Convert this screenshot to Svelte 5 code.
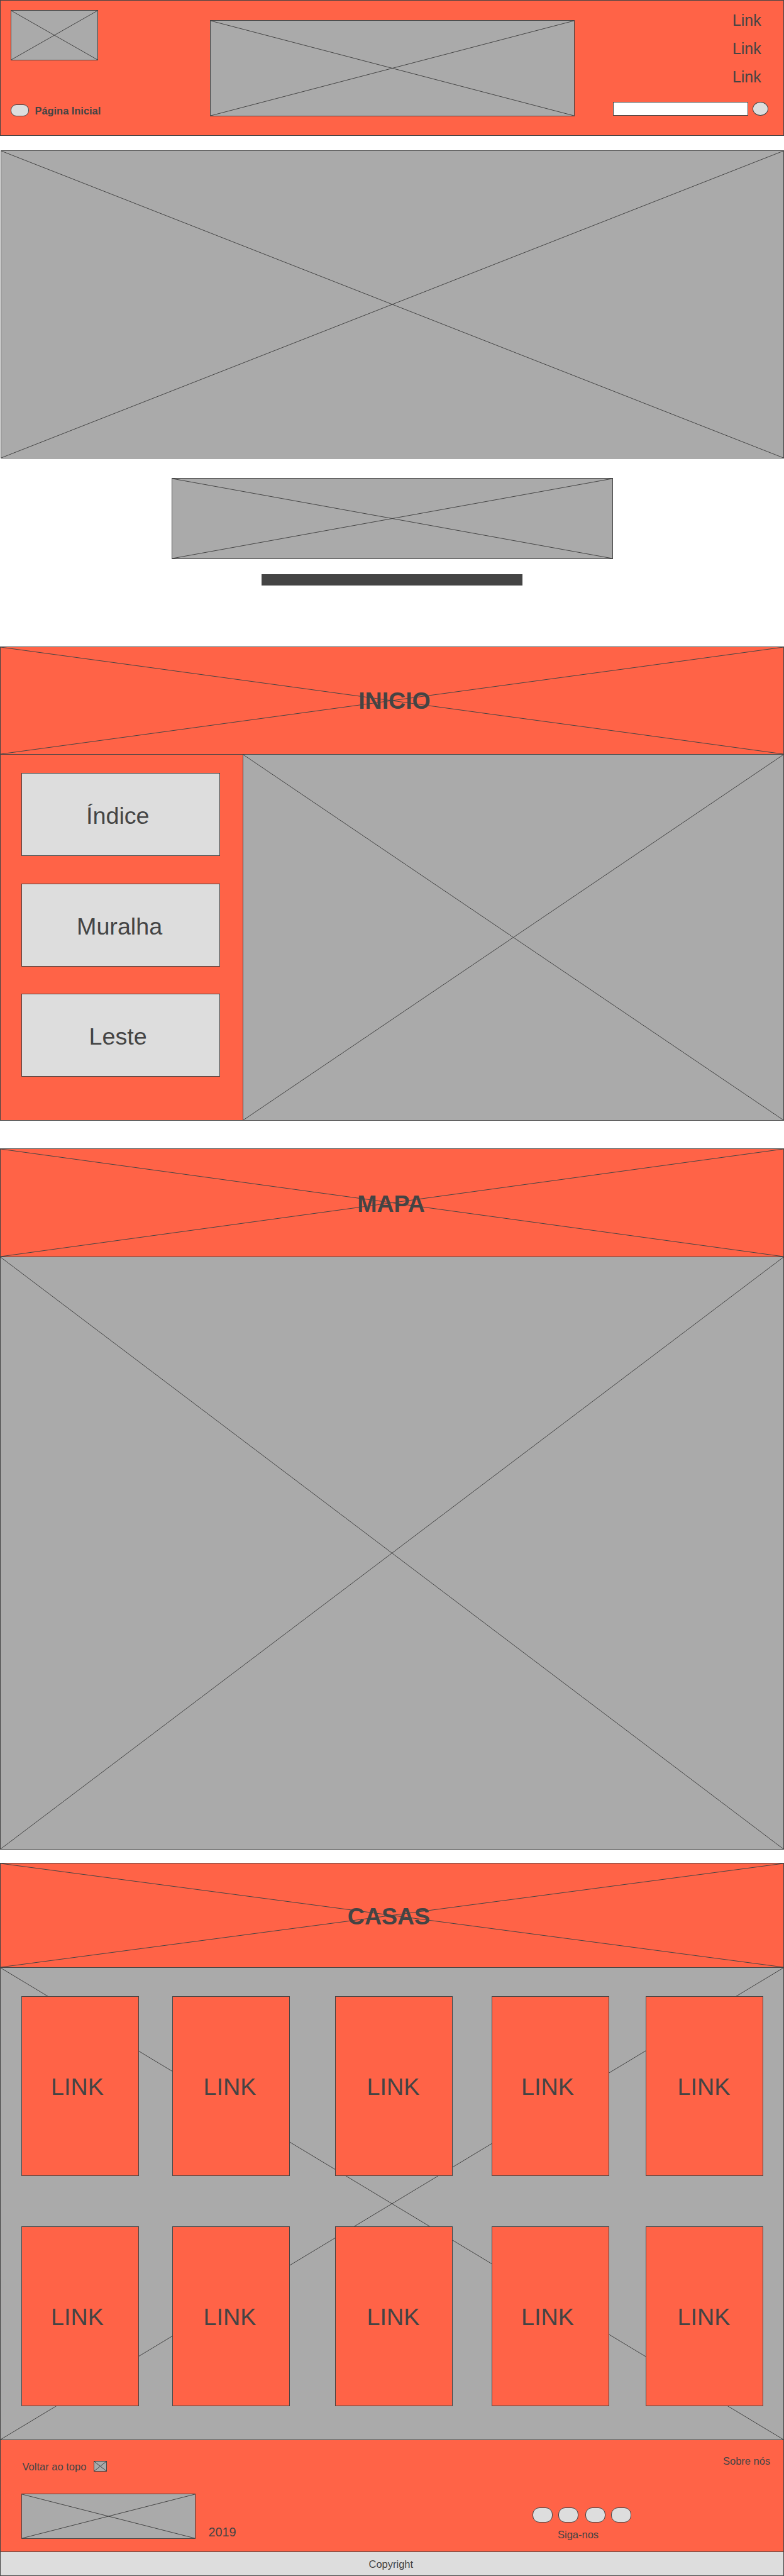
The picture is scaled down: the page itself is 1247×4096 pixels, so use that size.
<script>
  const menu = ['Índice', 'Muralha', 'Leste'];
  const houses = Array.from({ length: 10 }, () => 'LINK');
</script>

{#snippet cross()}
  <svg class="cross" viewBox="0 0 100 100" preserveAspectRatio="none" aria-hidden="true">
    <line x1="0" y1="0" x2="100" y2="100" />
    <line x1="100" y1="0" x2="0" y2="100" />
  </svg>
{/snippet}

<div class="page">
  <header class="box">
    <div class="brand">
      <div class="image logo">{@render cross()}</div>
      <div class="home"><span class="pill"></span><b>Página Inicial</b></div>
    </div>
    <div class="image banner">{@render cross()}</div>
    <div class="tools">
      <nav>
        <a>Link</a>
        <a>Link</a>
        <a>Link</a>
      </nav>
      <div class="search"><span class="field"></span><span class="go"></span></div>
    </div>
  </header>

  <div class="image hero">{@render cross()}</div>
  <div class="image caption">{@render cross()}</div>
  <div class="bar"></div>

  <section class="inicio">
    <div class="box title">{@render cross()}<h2>INICIO</h2></div>
    <div class="columns">
      <div class="box menu">
        {#each menu as item}
          <div class="button"><span>{item}</span></div>
        {/each}
      </div>
      <div class="image view">{@render cross()}</div>
    </div>
  </section>

  <section class="mapa">
    <div class="box title">{@render cross()}<h2>MAPA</h2></div>
    <div class="image map">{@render cross()}</div>
  </section>

  <section class="casas">
    <div class="box title">{@render cross()}<h2>CASAS</h2></div>
    <div class="image houses">
      {@render cross()}
      {#each houses as label}
        <div class="box card"><span>{label}</span></div>
      {/each}
    </div>
  </section>

  <footer>
    <div class="box foot">
      <div class="left">
        <div class="top"><span>Voltar ao topo</span><div class="image mini">{@render cross()}</div></div>
        <div class="sign"><div class="image mark">{@render cross()}</div><span>2019</span></div>
      </div>
      <div class="social">
        <div class="pills">
          <span class="pill"></span><span class="pill"></span><span class="pill"></span><span class="pill"></span>
        </div>
        <span class="follow">Siga-nos</span>
      </div>
      <span class="about">Sobre nós</span>
    </div>
    <div class="copy">Copyright</div>
  </footer>
</div>

<style>
  :global(body) {
    background: #fff;
  }
  .page,
  .page * {
    box-sizing: border-box;
  }
  .page {
    width: 1247px;
    height: 4096px;
    overflow: hidden;
    display: flex;
    flex-direction: column;
    font-family: 'Liberation Sans', Arial, sans-serif;
    color: #444;
  }
  .page > *,
  .foot > *,
  header > * {
    flex-shrink: 0;
  }
  .box {
    background: #ff6347;
    border: 1px solid #444;
  }
  .image {
    position: relative;
    background: #aaa;
    border: 1px solid #444;
    flex-shrink: 0;
  }
  .cross {
    position: absolute;
    inset: 0;
    width: 100%;
    height: 100%;
    display: block;
  }
  .cross line {
    stroke: #444;
    stroke-width: 1px;
    vector-effect: non-scaling-stroke;
  }
  .pill {
    display: block;
    background: #ddd;
    border: 1px solid #444;
  }

  header {
    height: 216px;
    display: flex;
  }
  .brand {
    width: 333px;
    padding: 15px 0 0 16px;
  }
  .logo {
    width: 139px;
    height: 80px;
  }
  .home {
    display: flex;
    margin-top: 70px;
  }
  .home .pill {
    width: 29px;
    height: 19px;
    border-radius: 9px;
  }
  .home b {
    font-size: 16.4px;
    line-height: 20px;
    margin-left: 9.5px;
  }
  .banner {
    width: 580px;
    height: 153px;
    margin-top: 31px;
  }
  .tools {
    margin-left: 61px;
    padding-top: 9px;
  }
  nav {
    padding-left: 190px;
    height: 152px;
  }
  nav a {
    display: block;
    font-size: 24.9px;
    line-height: 45px;
  }
  .search {
    display: flex;
    gap: 7px;
  }
  .field {
    width: 215px;
    height: 22px;
    background: #fff;
    border: 1px solid #444;
  }
  .go {
    width: 25px;
    height: 22px;
    border-radius: 50%;
    background: #ddd;
    border: 1px solid #444;
  }

  .hero {
    height: 490px;
    margin: 23px 0 0 1px;
  }
  .caption {
    width: 702px;
    height: 129px;
    margin: 31px 0 0 273px;
  }
  .bar {
    width: 415px;
    height: 18px;
    margin: 24px 0 0 416px;
    background: #444;
  }

  .title {
    position: relative;
    display: flex;
    justify-content: center;
    align-items: center;
  }
  h2 {
    position: relative;
    margin: 0;
    font-size: 37.5px;
    line-height: 44px;
  }
  .inicio {
    margin-top: 97px;
  }
  .inicio .title {
    height: 172px;
    padding-left: 8px;
  }
  .columns {
    display: flex;
    height: 583px;
    margin-top: -1px;
  }
  .menu {
    width: 387px;
    padding: 29px 0 0 33px;
    display: grid;
    grid-template-rows: 132px 132px 132px;
    row-gap: 44px;
    align-content: start;
  }
  .button {
    width: 316px;
    height: 132px;
    padding-top: 2px;
    background: #ddd;
    border: 1px solid #444;
    font-size: 37.7px;
    line-height: 130px;
    padding-left: 102px;
  }
  .button:nth-child(2) {
    padding-left: 87px;
  }
  .button:nth-child(3) {
    padding-left: 106.5px;
    margin-top: -1px;
  }
  .view {
    flex: 1;
    margin-left: -1px;
  }

  .mapa {
    margin-top: 44px;
  }
  .mapa .title {
    height: 173px;
    padding: 2px 3px 0 0;
  }
  .map {
    height: 943px;
    margin-top: -1px;
  }

  .casas {
    margin-top: 21px;
  }
  .casas .title {
    height: 167px;
    padding: 2px 10px 0 0;
  }
  .houses {
    height: 752px;
    margin-top: -1px;
    padding: 45px 0 0 33px;
    display: grid;
    grid-template-columns: 240px 259px 249px 245px 187px;
    grid-template-rows: 286px 286px;
    row-gap: 80px;
  }
  .card {
    position: relative;
    width: 187px;
    font-size: 37.7px;
    line-height: 286px;
    padding-left: 46px;
  }
  .card:nth-of-type(5n + 2) {
    padding-left: 48.5px;
  }
  .card:nth-of-type(5n + 3),
  .card:nth-of-type(5n + 5) {
    padding-left: 49.5px;
  }

  .foot {
    height: 179px;
    margin-top: -1px;
    display: flex;
    font-size: 16.5px;
    line-height: 20px;
  }
  .left {
    width: 846px;
    padding: 34px 0 0 33px;
  }
  .top {
    display: flex;
    height: 51px;
  }
  .top span {
    width: 115px;
    margin-top: -2px;
    padding-left: 1.5px;
  }
  .mini {
    width: 21px;
    height: 17px;
    margin-top: -1px;
  }
  .sign {
    display: flex;
  }
  .mark {
    width: 277px;
    height: 72px;
  }
  .sign span {
    font-size: 19.8px;
    margin: 51px 0 0 20.5px;
  }
  .social {
    width: 303px;
    padding-top: 107px;
  }
  .pills {
    display: grid;
    grid-template-columns: 41px 43px 41px 32px;
  }
  .pills .pill {
    width: 32px;
    height: 24px;
    border-radius: 11px;
  }
  .follow {
    display: block;
    margin: 9px 0 0 40px;
  }
  .about {
    padding-top: 23px;
    white-space: nowrap;
  }
  .copy {
    height: 39px;
    margin-top: -1px;
    background: #ddd;
    border: 1px solid #444;
    font-size: 16.5px;
    line-height: 39px;
    padding-left: 585.5px;
  }
</style>
